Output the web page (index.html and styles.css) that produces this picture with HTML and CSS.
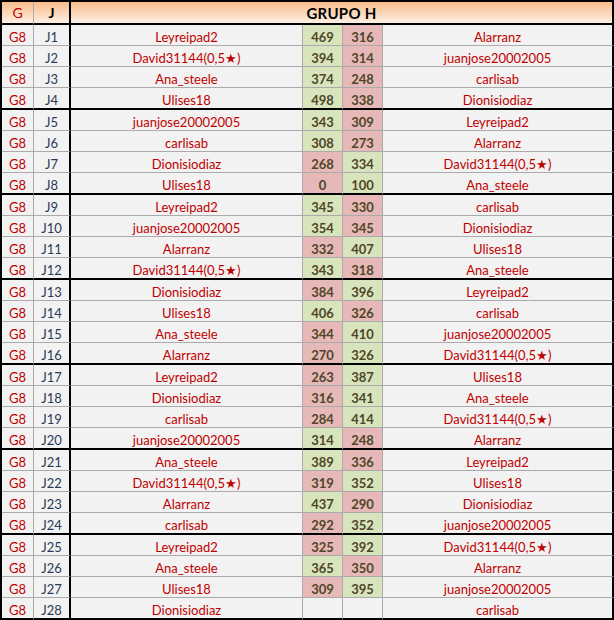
FILE: index.html
```html
<!DOCTYPE html>
<html>
<head>
<meta charset="utf-8">
<link rel="stylesheet" href="styles.css">
</head>
<body>
<table class="grid">
<colgroup>
<col class="c-g"><col class="c-j"><col class="c-n1"><col class="c-s"><col class="c-s"><col class="c-n2">
</colgroup>
<thead>
<tr class="head"><th class="g">G</th><th class="j">J</th><th class="title" colspan="4">GRUPO H</th></tr>
</thead>
<tbody>
<tr><td class="g">G8</td><td class="j">J1</td><td class="n">Leyreipad2</td><td class="s w">469</td><td class="s l">316</td><td class="n last">Alarranz</td></tr>
<tr><td class="g">G8</td><td class="j">J2</td><td class="n">David31144(0,5★)</td><td class="s w">394</td><td class="s l">314</td><td class="n last">juanjose20002005</td></tr>
<tr><td class="g">G8</td><td class="j">J3</td><td class="n">Ana_steele</td><td class="s w">374</td><td class="s l">248</td><td class="n last">carlisab</td></tr>
<tr class="end"><td class="g">G8</td><td class="j">J4</td><td class="n">Ulises18</td><td class="s w">498</td><td class="s l">338</td><td class="n last">Dionisiodiaz</td></tr>
<tr><td class="g">G8</td><td class="j">J5</td><td class="n">juanjose20002005</td><td class="s w">343</td><td class="s l">309</td><td class="n last">Leyreipad2</td></tr>
<tr><td class="g">G8</td><td class="j">J6</td><td class="n">carlisab</td><td class="s w">308</td><td class="s l">273</td><td class="n last">Alarranz</td></tr>
<tr><td class="g">G8</td><td class="j">J7</td><td class="n">Dionisiodiaz</td><td class="s l">268</td><td class="s w">334</td><td class="n last">David31144(0,5★)</td></tr>
<tr class="end"><td class="g">G8</td><td class="j">J8</td><td class="n">Ulises18</td><td class="s l">0</td><td class="s w">100</td><td class="n last">Ana_steele</td></tr>
<tr><td class="g">G8</td><td class="j">J9</td><td class="n">Leyreipad2</td><td class="s w">345</td><td class="s l">330</td><td class="n last">carlisab</td></tr>
<tr><td class="g">G8</td><td class="j">J10</td><td class="n">juanjose20002005</td><td class="s w">354</td><td class="s l">345</td><td class="n last">Dionisiodiaz</td></tr>
<tr><td class="g">G8</td><td class="j">J11</td><td class="n">Alarranz</td><td class="s l">332</td><td class="s w">407</td><td class="n last">Ulises18</td></tr>
<tr class="end"><td class="g">G8</td><td class="j">J12</td><td class="n">David31144(0,5★)</td><td class="s w">343</td><td class="s l">318</td><td class="n last">Ana_steele</td></tr>
<tr><td class="g">G8</td><td class="j">J13</td><td class="n">Dionisiodiaz</td><td class="s l">384</td><td class="s w">396</td><td class="n last">Leyreipad2</td></tr>
<tr><td class="g">G8</td><td class="j">J14</td><td class="n">Ulises18</td><td class="s w">406</td><td class="s l">326</td><td class="n last">carlisab</td></tr>
<tr><td class="g">G8</td><td class="j">J15</td><td class="n">Ana_steele</td><td class="s l">344</td><td class="s w">410</td><td class="n last">juanjose20002005</td></tr>
<tr class="end"><td class="g">G8</td><td class="j">J16</td><td class="n">Alarranz</td><td class="s l">270</td><td class="s w">326</td><td class="n last">David31144(0,5★)</td></tr>
<tr><td class="g">G8</td><td class="j">J17</td><td class="n">Leyreipad2</td><td class="s l">263</td><td class="s w">387</td><td class="n last">Ulises18</td></tr>
<tr><td class="g">G8</td><td class="j">J18</td><td class="n">Dionisiodiaz</td><td class="s l">316</td><td class="s w">341</td><td class="n last">Ana_steele</td></tr>
<tr><td class="g">G8</td><td class="j">J19</td><td class="n">carlisab</td><td class="s l">284</td><td class="s w">414</td><td class="n last">David31144(0,5★)</td></tr>
<tr class="end"><td class="g">G8</td><td class="j">J20</td><td class="n">juanjose20002005</td><td class="s w">314</td><td class="s l">248</td><td class="n last">Alarranz</td></tr>
<tr><td class="g">G8</td><td class="j">J21</td><td class="n">Ana_steele</td><td class="s w">389</td><td class="s l">336</td><td class="n last">Leyreipad2</td></tr>
<tr><td class="g">G8</td><td class="j">J22</td><td class="n">David31144(0,5★)</td><td class="s l">319</td><td class="s w">352</td><td class="n last">Ulises18</td></tr>
<tr><td class="g">G8</td><td class="j">J23</td><td class="n">Alarranz</td><td class="s w">437</td><td class="s l">290</td><td class="n last">Dionisiodiaz</td></tr>
<tr class="end"><td class="g">G8</td><td class="j">J24</td><td class="n">carlisab</td><td class="s l">292</td><td class="s w">352</td><td class="n last">juanjose20002005</td></tr>
<tr><td class="g">G8</td><td class="j">J25</td><td class="n">Leyreipad2</td><td class="s l">325</td><td class="s w">392</td><td class="n last">David31144(0,5★)</td></tr>
<tr><td class="g">G8</td><td class="j">J26</td><td class="n">Ana_steele</td><td class="s w">365</td><td class="s l">350</td><td class="n last">Alarranz</td></tr>
<tr><td class="g">G8</td><td class="j">J27</td><td class="n">Ulises18</td><td class="s l">309</td><td class="s w">395</td><td class="n last">juanjose20002005</td></tr>
<tr class="end"><td class="g">G8</td><td class="j">J28</td><td class="n">Dionisiodiaz</td><td class="s"></td><td class="s"></td><td class="n last">carlisab</td></tr>
</tbody>
</table>
</body>
</html>
```

FILE: styles.css
```css
html, body {
  margin: 0;
  padding: 0;
  background: #ffffff;
}

.grid {
  border-collapse: separate;
  border-spacing: 0;
  table-layout: fixed;
  width: 614px;
  border-left: 2px solid #000;
  border-top: 2px solid #000;
  font-family: Lato, "Open Sans", sans-serif;
  font-size: 13px;
}

.c-g { width: 32px; }
.c-j { width: 37px; }
.c-n1 { width: 232px; }
.c-s { width: 40px; }
.c-n2 { width: 231px; }

.grid th,
.grid td {
  box-sizing: border-box;
  padding: 0;
  text-align: center;
  white-space: nowrap;
  overflow: hidden;
  border-right: 1px solid #ababab;
  border-bottom: 1px solid #ababab;
}

.grid td {
  height: 21px;
  padding-top: 4px;
  line-height: 16px;
  vertical-align: top;
  background: #f2f2f2;
  color: #c00000;
}

.head th {
  height: 23px;
  padding-top: 2px;
  line-height: 18px;
  vertical-align: top;
  background: linear-gradient(#f9bd8c, #fdefe4);
  border-bottom: 2px solid #000;
  font-weight: bold;
  font-size: 13px;
}

.head .g { color: #c00000; font-weight: normal; font-size: 14px; }
.head .j { color: #000; font-weight: bold; font-size: 14px; }
.head .title {
  color: #000;
  font-size: 15px;
  letter-spacing: 0.3px;
  border-right: 2px solid #000;
}

.grid .j { border-right: 2px solid #000; }
.grid td.j { color: #2c3a56; }
.grid td.g { color: #c00000; }
.grid td.last { border-right: 2px solid #000; }

.grid td.s {
  font-weight: bold;
  color: #4e4628;
}
.grid td.w { background: #d8e4bc; }
.grid td.l { background: #e6b8b7; }

.grid tr.end td {
  height: 22px;
  border-bottom: 2px solid #000;
}
```
